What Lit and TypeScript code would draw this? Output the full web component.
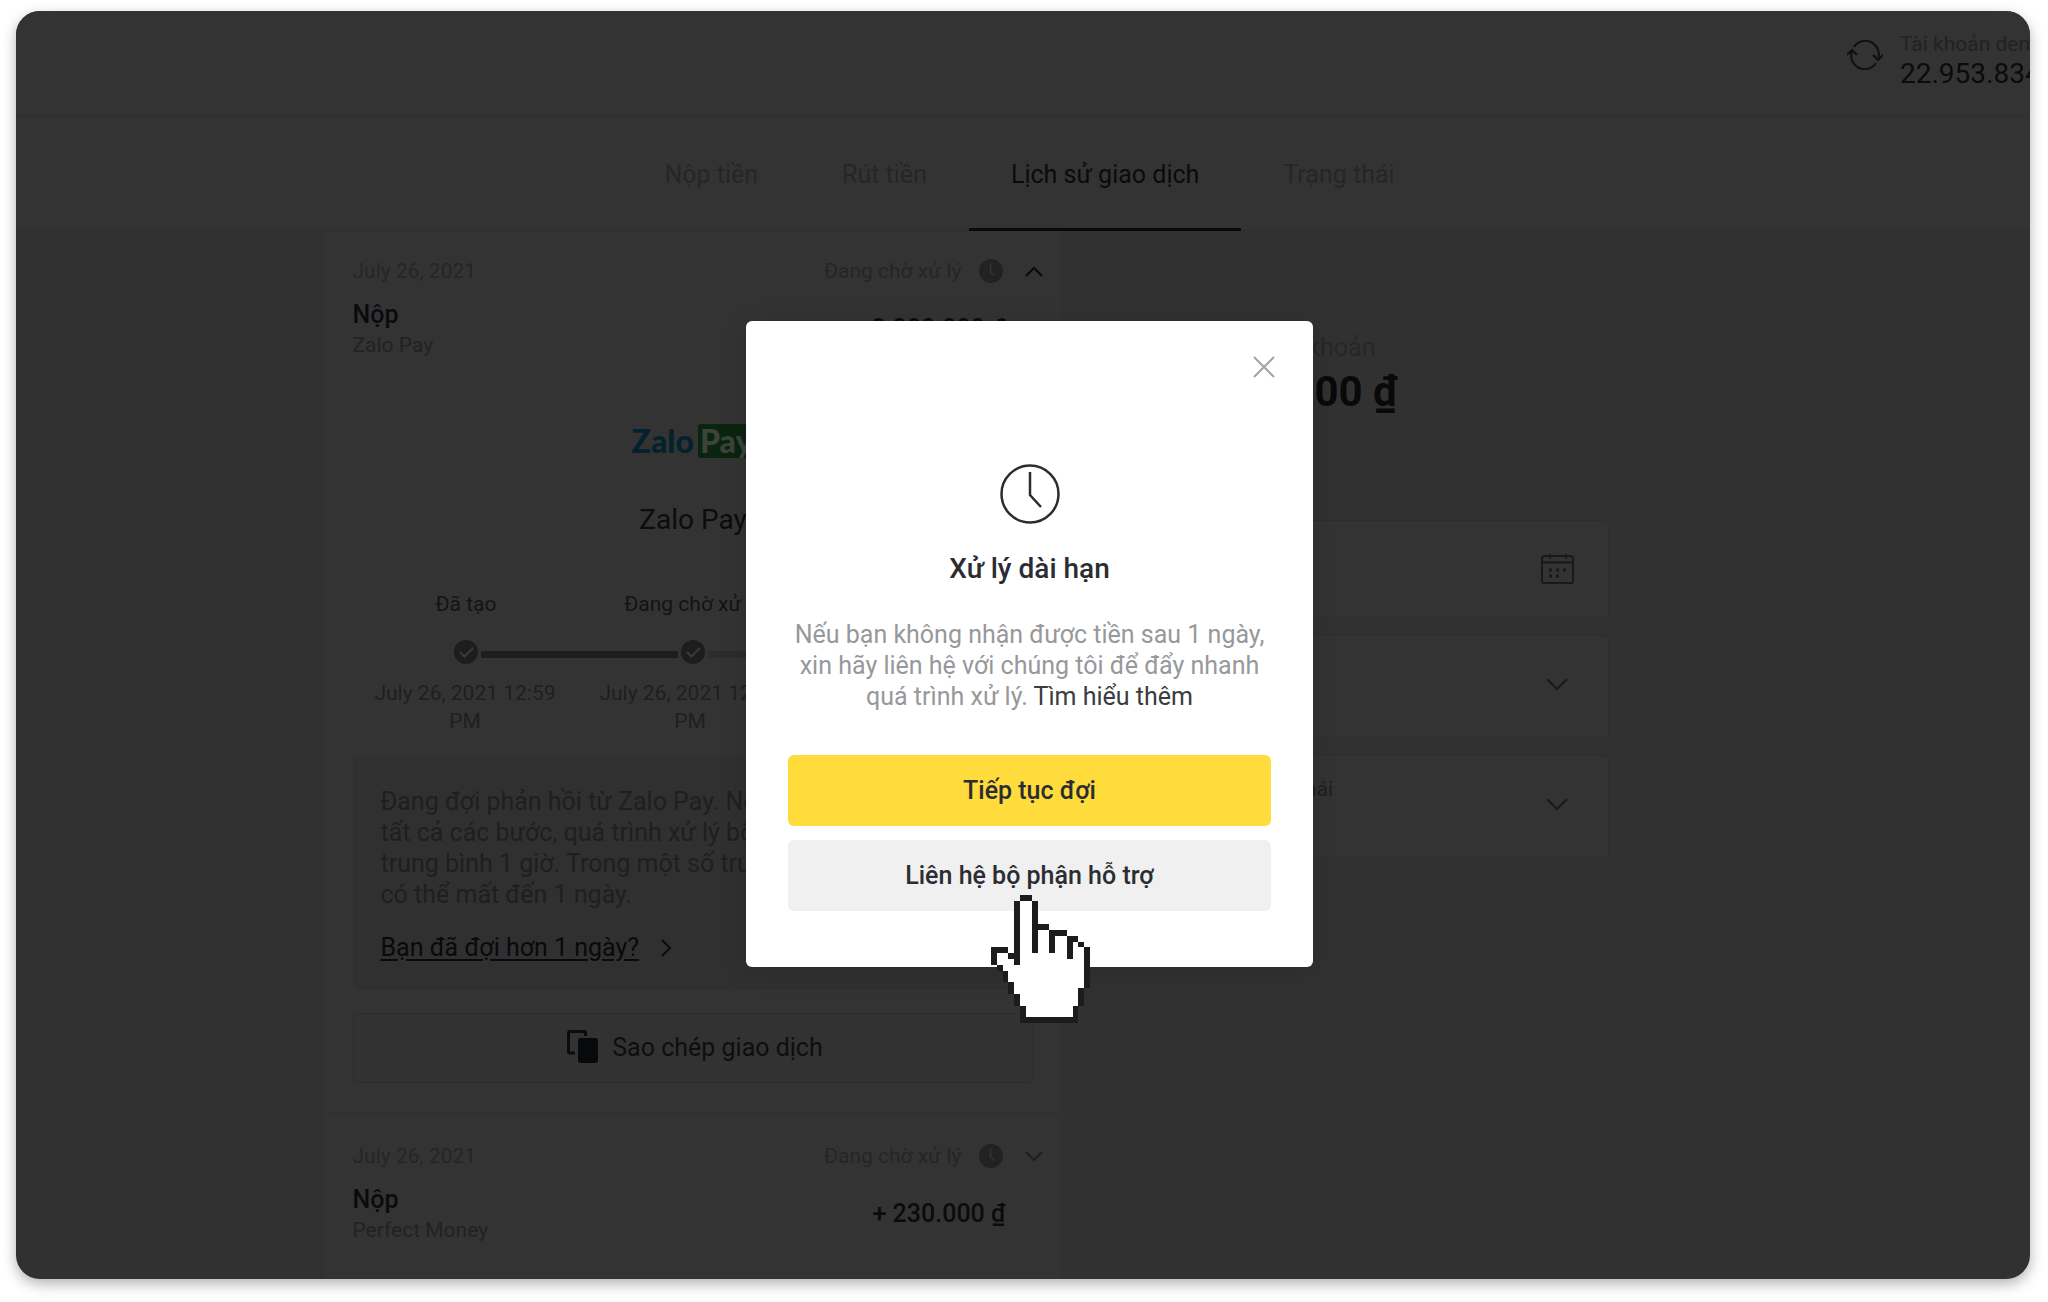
import { LitElement, html, svg, css, nothing } from "lit";
import { customElement, property } from "lit/decorators.js";

const clockBadge = html`<svg class="badge" viewBox="0 0 24 24" aria-hidden="true">
  <circle cx="12" cy="12" r="12" fill="#212323"></circle>
  <path d="M11.500 4.500V13L16 16.500" fill="none" stroke="#343636" stroke-width="1.500"></path>
</svg>`;

const checkBadge = html`<svg class="badge" viewBox="0 0 24 24" aria-hidden="true">
  <circle cx="12" cy="12" r="12" fill="#1d1d1d"></circle>
  <path d="M6 12L10.500 16.500L19 8" fill="none" stroke="#3a3a3a" stroke-width="2"></path>
</svg>`;

@customElement("history-entry")
class HistoryEntry extends LitElement {
  @property() date = "";
  @property() status = "";
  @property() kind = "";
  @property() method = "";
  @property() amount = "";
  @property({ type: Boolean }) open = false;

  static styles = css`
    :host {
      display: block;
      padding: 26px 28px 30px;
      font-size: 21px;
      line-height: 28px;
      color: #222;
    }
    .top {
      display: flex;
      align-items: center;
      margin-right: -9px;
      color: #242626;
    }
    .status {
      margin-left: auto;
    }
    .badge {
      display: block;
      width: 24px;
      height: 24px;
      margin: 0 22px 0 17px;
    }
    .toggle {
      display: block;
      padding: 0;
      border: 0;
      background: none;
      color: #1d1f1f;
    }
    .toggle.open {
      color: #090909;
    }
    .toggle svg {
      display: block;
      width: 18px;
      height: 11px;
    }
    .main {
      display: flex;
      align-items: center;
      justify-content: space-between;
      margin: 14px 28px 0 0;
    }
    .kind {
      font-size: 25px;
      line-height: 32px;
      font-weight: 500;
      color: #0b0b0d;
    }
    .amount {
      font-size: 25px;
      line-height: 32px;
      font-weight: 500;
      color: #0b0b0b;
    }
  `;

  render() {
    return html`
      <div class="top">
        <span>${this.date}</span>
        <span class="status">${this.status}</span>
        ${clockBadge}
        <button class="toggle ${this.open ? "open" : ""}" aria-label=${this.status} aria-expanded=${this.open}>
          <svg viewBox="0 0 18 11" fill="none" stroke="currentColor" stroke-width="2">
            ${this.open ? svg`<path d="M1 10L9 2L17 10"></path>` : svg`<path d="M1 1L9 9L17 1"></path>`}
          </svg>
        </button>
      </div>
      <div class="main">
        <div>
          <div class="kind">${this.kind}</div>
          <div>${this.method}</div>
        </div>
        <div class="amount">${this.amount}</div>
      </div>
      <slot></slot>
    `;
  }
}

@customElement("support-dialog")
class SupportDialog extends LitElement {
  static styles = css`
    :host {
      display: block;
      position: relative;
      box-sizing: border-box;
      width: 567px;
      padding: 35px 42px 56px;
      border-radius: 6px;
      background: #fff;
      box-shadow: 0 4px 28px rgba(0, 0, 0, 0.12);
      color: #2b2d33;
      text-align: center;
    }
    .close {
      display: block;
      margin: 0 -4px 0 auto;
      padding: 0;
      border: 0;
      background: none;
    }
    .close svg {
      display: block;
      width: 22px;
      height: 22px;
    }
    .clock {
      display: block;
      width: 60px;
      height: 60px;
      margin: 86px auto 27px;
    }
    h2 {
      margin: 0 0 32px;
      font-size: 28px;
      line-height: 36px;
      font-weight: 500;
    }
    p {
      margin: 0 0 43px;
      font-size: 25px;
      line-height: 31px;
      color: #97989b;
    }
    p a {
      color: #3a3c41;
      text-decoration: none;
    }
    .actions {
      display: grid;
      gap: 14px;
    }
    .action {
      height: 71px;
      padding: 0;
      border: 0;
      border-radius: 6px;
      background: #f0f0f0;
      color: inherit;
      font: inherit;
      font-size: 25px;
      font-weight: 500;
    }
    .primary {
      background: #ffdc3c;
    }
    .pointer {
      position: absolute;
      left: 245px;
      top: 574px;
      width: 99px;
      height: 128px;
      pointer-events: none;
    }
  `;

  render() {
    return html`
      <button class="close" aria-label="Đóng">
        <svg viewBox="0 0 22 22" fill="none" stroke="#a2a3a5" stroke-width="2"><path d="M1 1L21 21M21 1L1 21"></path></svg>
      </button>
      <svg class="clock" viewBox="0 0 60 60" fill="none" stroke="#2b2d33" stroke-width="2.500" aria-hidden="true">
        <circle cx="30" cy="30" r="28.500"></circle>
        <path d="M30 8V31L41 43"></path>
      </svg>
      <h2>Xử lý dài hạn</h2>
      <p>
        Nếu bạn không nhận được tiền sau 1 ngày, xin hãy liên hệ với chúng tôi để đẩy nhanh quá trình xử lý.
        <a href="#more">Tìm hiểu thêm</a>
      </p>
      <div class="actions">
        <button class="action primary">Tiếp tục đợi</button>
        <button class="action">Liên hệ bộ phận hỗ trợ</button>
      </div>
      <svg class="pointer" viewBox="0 0 17 22" preserveAspectRatio="none" shape-rendering="crispEdges" aria-hidden="true">
        <path fill="#fff" d="M5 1H7V6H10V7H13V8H15V9H16V16H15V19H14V21H6V19H5V17H4V15H3V13H2V12H1V10H3V11H5Z"></path>
        <path fill="#1c1c1c" d="M5 0h2v1h-2zM4 1h1v11h-1zM7 1h1v9h-1zM8 5h2v1h-2zM10 6h3v1h-2v3h-1zM13 7h2v1h-1v3h-1zM15 8h1v1h-1zM16 9h1v7h-1zM15 16h1v3h-1zM14 19h1v3h-10v-3h1v2h8zM0 9h3v1h-2v2h-1zM3 10h1v1h-1zM1 12h1v1h-1zM2 13h1v2h-1zM3 15h1v2h-1zM4 17h1v2h-1z"></path>
      </svg>
    `;
  }
}

@customElement("app-root")
class AppRoot extends LitElement {
  static styles = css`
    :host {
      display: flex;
      box-sizing: border-box;
      min-height: 100vh;
      padding: 11px 18px 23px 16px;
      background: #fff;
      font-family: Roboto, "Liberation Sans", sans-serif;
      font-size: 21px;
      line-height: 28px;
      color: #222;
    }
    .frame {
      flex: 1;
      min-width: 0;
      display: flex;
      overflow: hidden;
      border-radius: 24px;
      background: #313131;
      box-shadow: 0 5px 14px rgba(0, 0, 0, 0.3);
    }
    .page {
      position: relative;
      flex: none;
      width: calc(100% + 13px);
      display: flex;
      flex-direction: column;
    }
    header {
      display: flex;
      justify-content: flex-end;
      box-sizing: border-box;
      height: 106px;
      padding-top: 19px;
      border-bottom: 1px solid #2e2e2e;
      background: #333;
    }
    .refresh {
      width: 36px;
      height: 30px;
      margin: 10px 17px 0 0;
    }
    .account {
      width: 143px;
      white-space: nowrap;
    }
    .account strong {
      display: block;
      font-size: 28px;
      line-height: 32px;
      font-weight: 400;
      color: #0b0b0b;
    }
    nav {
      display: flex;
      justify-content: center;
      border-bottom: 1px solid #2e2e2e;
      background: #333;
    }
    nav a {
      margin-bottom: -1px;
      padding: 42px 42px 38px;
      border-bottom: 3px solid transparent;
      font-size: 25px;
      line-height: 31px;
      color: #262626;
      text-decoration: none;
    }
    nav a.current {
      border-color: #090a0b;
      color: #0b0b0d;
    }
    main {
      flex: 1;
      display: grid;
      grid-template-columns: 737px 463px;
      column-gap: 84px;
      box-sizing: border-box;
      width: 100%;
      max-width: 1410px;
      margin: 0 auto;
    }
    .panel {
      background: #333;
    }
    .next {
      border-top: 1px solid #2e2e2e;
      padding-top: 28px;
    }
    .logo {
      display: flex;
      align-items: center;
      justify-content: center;
      height: 56px;
      margin: 54px 0 33px;
      font-family: Lato, "Open Sans", sans-serif;
      font-weight: 900;
      font-size: 32px;
      line-height: 34px;
      color: #04222e;
    }
    .logo span {
      margin-left: 4px;
      padding: 0 2px;
      border-radius: 3px;
      background: #0a2410;
      color: #3c423c;
    }
    .name {
      font-size: 28px;
      line-height: 36px;
      text-align: center;
      color: #0c0c0c;
    }
    .steps {
      display: grid;
      grid-template-columns: repeat(3, 1fr);
      justify-items: center;
      margin-top: 52px;
      text-align: center;
      color: #131313;
    }
    .track {
      display: flex;
      align-items: center;
      gap: 3px;
      margin: 22px 102px 15px 101px;
    }
    .track .badge {
      flex: none;
      width: 24px;
      height: 24px;
    }
    .bar {
      flex: 1;
      height: 7px;
      margin-top: 4px;
      background: #1d1d1d;
    }
    .todo {
      background: #2c2c2c;
    }
    .dates {
      margin-top: 0;
      padding-right: 6px;
      color: #1f1f1f;
    }
    .dates span {
      padding: 0 12px;
    }
    .info {
      margin-top: 21px;
      padding: 30px 28px 27px;
      border-radius: 6px;
      background: #303030;
      font-size: 25px;
      line-height: 31px;
      color: #1f1f1f;
      white-space: nowrap;
    }
    .info a {
      display: flex;
      align-items: center;
      gap: 22px;
      margin-top: 22px;
      color: #080a0c;
      text-underline-offset: 3px;
    }
    .info a svg {
      width: 11px;
      height: 18px;
    }
    .copy {
      display: flex;
      align-items: center;
      justify-content: center;
      gap: 14px;
      width: 100%;
      height: 70px;
      margin-top: 23px;
      padding: 0 0 0 4px;
      border: 1px solid #2c2c2c;
      border-radius: 6px;
      background: #323232;
      font: inherit;
      font-size: 25px;
      color: #0e0e0e;
    }
    .copy svg {
      width: 31px;
      height: 33px;
      margin-bottom: 4px;
    }
    .caption {
      margin-top: 101px;
      font-size: 25px;
      line-height: 31px;
      color: #272727;
    }
    .balance {
      margin-top: 5px;
      font-size: 42px;
      line-height: 48px;
      font-weight: 700;
      color: #08090a;
      white-space: nowrap;
    }
    .filters {
      display: grid;
      gap: 17px;
      margin-top: 104px;
    }
    .field {
      display: flex;
      align-items: center;
      box-sizing: border-box;
      height: 103px;
      padding: 0 34px 5px 10px;
      border: 1px solid #2d2d2d;
      border-radius: 6px;
      background: #333;
      color: #1f1f1f;
    }
    .date {
      height: 98px;
      padding-bottom: 0;
    }
    .text {
      flex: 1;
      min-width: 0;
    }
    .text > span {
      display: block;
    }
    .field input,
    .field select {
      display: block;
      width: 140px;
      height: 30px;
      padding: 0;
      border: 0;
      appearance: none;
      background: none;
      font: inherit;
      color: inherit;
    }
    .calendar {
      width: 33px;
      height: 30px;
    }
    .arrow {
      width: 22px;
      height: 12px;
      margin-right: 6px;
    }
    .overlay {
      position: absolute;
      inset: 0;
      display: flex;
      align-items: center;
      justify-content: center;
      padding-bottom: 2px;
    }
  `;

  private arrow() {
    return html`<svg class="arrow" viewBox="0 0 22 12" fill="none" stroke="#191919" stroke-width="2" aria-hidden="true">
      <path d="M1 1L11 11L21 1"></path>
    </svg>`;
  }

  render() {
    const tabs = ["Nộp tiền", "Rút tiền", "Lịch sử giao dịch", "Trạng thái"];
    return html`
      <div class="frame">
        <div class="page">
          <header>
            <svg class="refresh" viewBox="0 0 36 30" fill="none" stroke="#101010" stroke-width="2" aria-hidden="true">
              <path d="M7 7A13.500 13.500 0 0 1 31 19M26 15L31 20L36 15"></path>
              <path d="M29 23A13.500 13.500 0 0 1 5 11M0 15L5 10L10 15"></path>
            </svg>
            <div class="account">
              Tài khoản demo
              <strong>22.953.834,00 ₫</strong>
            </div>
          </header>
          <nav>
            ${tabs.map((t, i) => html`<a href="#tab-${i}" class=${i === 2 ? "current" : nothing}>${t}</a>`)}
          </nav>
          <main>
            <section class="panel">
              <history-entry open date="July 26, 2021" status="Đang chờ xử lý" kind="Nộp" method="Zalo Pay" amount="+ 2.300.000 ₫">
                <div class="logo">Zalo<span>Pay</span></div>
                <div class="name">Zalo Pay</div>
                <div class="steps"><span>Đã tạo</span><span>Đang chờ xử lý</span><span>Hoàn tất</span></div>
                <div class="track">
                  ${checkBadge}
                  <div class="bar"></div>
                  ${checkBadge}
                  <div class="bar todo"></div>
                  ${checkBadge}
                </div>
                <div class="steps dates"><span>July 26, 2021 12:59 PM</span><span>July 26, 2021 12:59 PM</span></div>
                <div class="info">
                  Đang đợi phản hồi từ Zalo Pay. Nếu bạn đã xong<br />
                  tất cả các bước, quá trình xử lý bổ sung sẽ mất<br />
                  trung bình 1 giờ. Trong một số trường hợp,<br />
                  có thể mất đến 1 ngày.
                  <a href="#waiting">
                    Bạn đã đợi hơn 1 ngày?
                    <svg viewBox="0 0 11 18" fill="none" stroke="#0c0c0c" stroke-width="2" aria-hidden="true"><path d="M1 1L9 9L1 17"></path></svg>
                  </a>
                </div>
                <button class="copy">
                  <svg viewBox="0 0 31 33" aria-hidden="true">
                    <path d="M8 23H3Q1.500 23 1.500 21.500V3Q1.500 1.500 3 1.500H17Q18.500 1.500 18.500 3V6" fill="none" stroke="#0a0b0c" stroke-width="3"></path>
                    <rect x="11" y="8" width="20" height="25" rx="3" fill="#08090a"></rect>
                  </svg>
                  Sao chép giao dịch
                </button>
              </history-entry>
              <history-entry class="next" date="July 26, 2021" status="Đang chờ xử lý" kind="Nộp" method="Perfect Money" amount="+ 230.000 ₫"></history-entry>
            </section>
            <aside>
              <div class="caption">Số dư thực tài khoản</div>
              <div class="balance">22.953.000 ₫</div>
              <div class="filters">
                <label class="field date">
                  <span class="text"><input aria-label="Khoảng thời gian" /></span>
                  <svg class="calendar" viewBox="0 0 33 30" fill="none" stroke="#191919" stroke-width="2" aria-hidden="true">
                    <path d="M1 8V4.500Q1 2 3.500 2H29.500Q32 2 32 4.500V27Q32 29 30 29H3Q1 29 1 27V8.500H32M9 0V5M25 0V5"></path>
                    <path d="M8 16h3M15 16h3M22 16h3M8 22h3M15 22h3" stroke-width="3"></path>
                  </svg>
                </label>
                <label class="field">
                  <span class="text"><select aria-label="Loại giao dịch"><option>Tất cả</option></select></span>
                  ${this.arrow()}
                </label>
                <label class="field">
                  <span class="text"><span>Tìm theo trạng thái</span><select><option>Tất cả</option></select></span>
                  ${this.arrow()}
                </label>
              </div>
            </aside>
          </main>
          <div class="overlay"><support-dialog role="dialog"></support-dialog></div>
        </div>
      </div>
    `;
  }
}
